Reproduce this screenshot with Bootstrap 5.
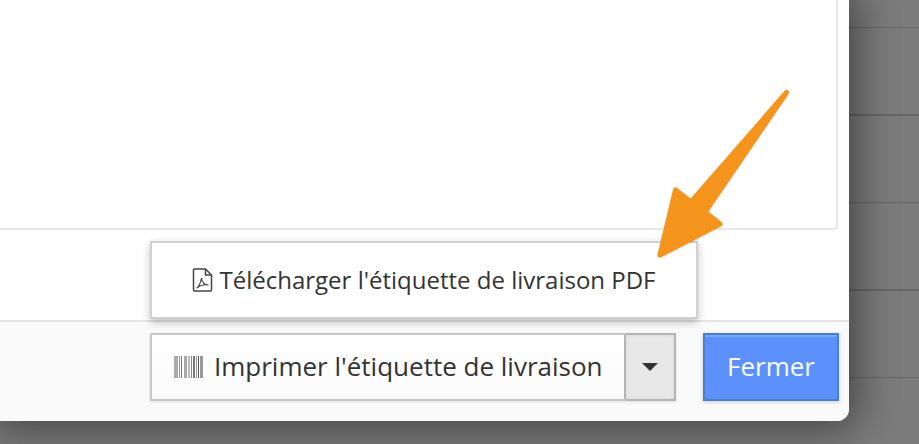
<!DOCTYPE html>
<html lang="fr">
<head>
<meta charset="utf-8">
<title>Étiquette de livraison</title>
<link rel="stylesheet" href="https://cdn.jsdelivr.net/npm/bootstrap@5.3.0/dist/css/bootstrap.min.css">
<style>
html,body{height:100%;margin:0;overflow:hidden}
body{font-family:"Open Sans",sans-serif;color:#333;background-color:#7b7b7b;
background-image:repeating-linear-gradient(to bottom,transparent 0,transparent 86px,#666 86px,#666 87.4px);background-position:0 -59px;}
.sheet{width:849px;height:421px;background:#fff;border-radius:0 0 12px 0;box-shadow:0 0 40px 8px rgba(0,0,0,.45);position:relative}
.pane-area{height:322px;border-bottom:2px solid #e6e6e6;padding-right:11px}
.pane{height:230px;background:#fff;border:2px solid #e9e9e9;border-top:0;border-left:0;border-radius:0 0 4px 0}
.foot{height:99px;background:#fafafa;border-radius:0 0 12px 0;padding:11px 10px 0 150px;gap:27px}
.split{width:526px;height:68px;border:2px solid #c8c8c8;background:linear-gradient(#fff,#fafafa);box-shadow:0 1px 3px rgba(0,0,0,.1)}
.split-main{width:474px;font-size:26px;line-height:1;gap:11px;padding-left:22px;color:#333;white-space:nowrap;border-right:2px solid #b5b5b5}
.split-main span{margin-top:-2px}
.split-caret{flex:1;background:#e8e8e8;border:2px solid #b5b5b5;border-left:0;margin:-2px -2px -2px 0;box-shadow:inset 0 0 4px rgba(0,0,0,.06)}
.tri{width:0;height:0;border-left:8px solid transparent;border-right:8px solid transparent;border-top:8px solid #333}
.close-btn{width:136px;height:68px;background:#5b90fd;color:#fff;font-size:26px;border:2px solid #4a80c4;box-shadow:inset 0 2px 0 rgba(255,255,255,.2),0 1px 4px rgba(0,0,0,.2);border-radius:0;padding:0 0 2px}
.close-btn:hover{background:#5b90fd;color:#fff}
.drop{position:absolute;left:150px;top:241px;width:548px;height:78px;background:#fff;border:2px solid #d0d0d0;box-shadow:0 3px 8px rgba(0,0,0,.25);font-size:24px;gap:6px;color:#333;white-space:nowrap}
.arrow{position:absolute;left:650px;top:85px;width:150px;height:175px;filter:drop-shadow(0 1px 1px rgba(0,0,0,.12))}
</style>
</head>
<body>
<div class="sheet d-flex flex-column">
  <div class="pane-area"><div class="pane"></div></div>
  <div class="foot d-flex align-items-start">
    <div class="split d-flex">
      <div class="split-main d-flex align-items-center">
        <svg width="29" height="22" viewBox="0 0 29 22" aria-hidden="true"><rect x="0" width="4" height="22" fill="#aaa"/><rect x="5" width="1" height="22" fill="#999"/><rect x="7" width="1" height="22" fill="#777"/><rect x="10" width="3" height="22" fill="#aaa"/><rect x="14" width="2" height="22" fill="#bbb"/><rect x="17" width="1" height="22" fill="#888"/><rect x="19" width="2" height="22" fill="#777"/><rect x="22" width="1" height="22" fill="#999"/><rect x="24" width="1" height="22" fill="#555"/><rect x="26" width="3" height="22" fill="#999"/></svg>
        <span>Imprimer l'étiquette de livraison</span>
      </div>
      <div class="split-caret d-flex align-items-center justify-content-center"><span class="tri"></span></div>
    </div>
    <button type="button" class="btn close-btn">Fermer</button>
  </div>
  <div class="drop d-flex align-items-center justify-content-center">
    <svg width="21" height="24" viewBox="0 0 21 24" fill="none" stroke="#444" stroke-width="1.500" aria-hidden="true"><path d="M2.500 1h11l6 6v15a1 1 0 0 1-1 1H2.500a1 1 0 0 1-1-1V2a1 1 0 0 1 1-1z"/><path d="M13.500 1v6h6"/><path d="M4.500 20c2-1 4-5 5-10 .5 4 3 7 7 7-3-.5-8 0-12 3z" stroke-width="1.200"/></svg>
    <span>Télécharger l'étiquette de livraison PDF</span>
  </div>
  <svg class="arrow" viewBox="0 0 150 175" aria-hidden="true"><path d="M136.500 7.500 L41 117 L25.500 105 L10 170 L70 139 L55 127 Z" fill="#f4941c" stroke="#f4941c" stroke-width="5" stroke-linejoin="round"/></svg>
</div>
<script src="https://cdn.jsdelivr.net/npm/bootstrap@5.3.0/dist/js/bootstrap.bundle.min.js"></script>
</body>
</html>
